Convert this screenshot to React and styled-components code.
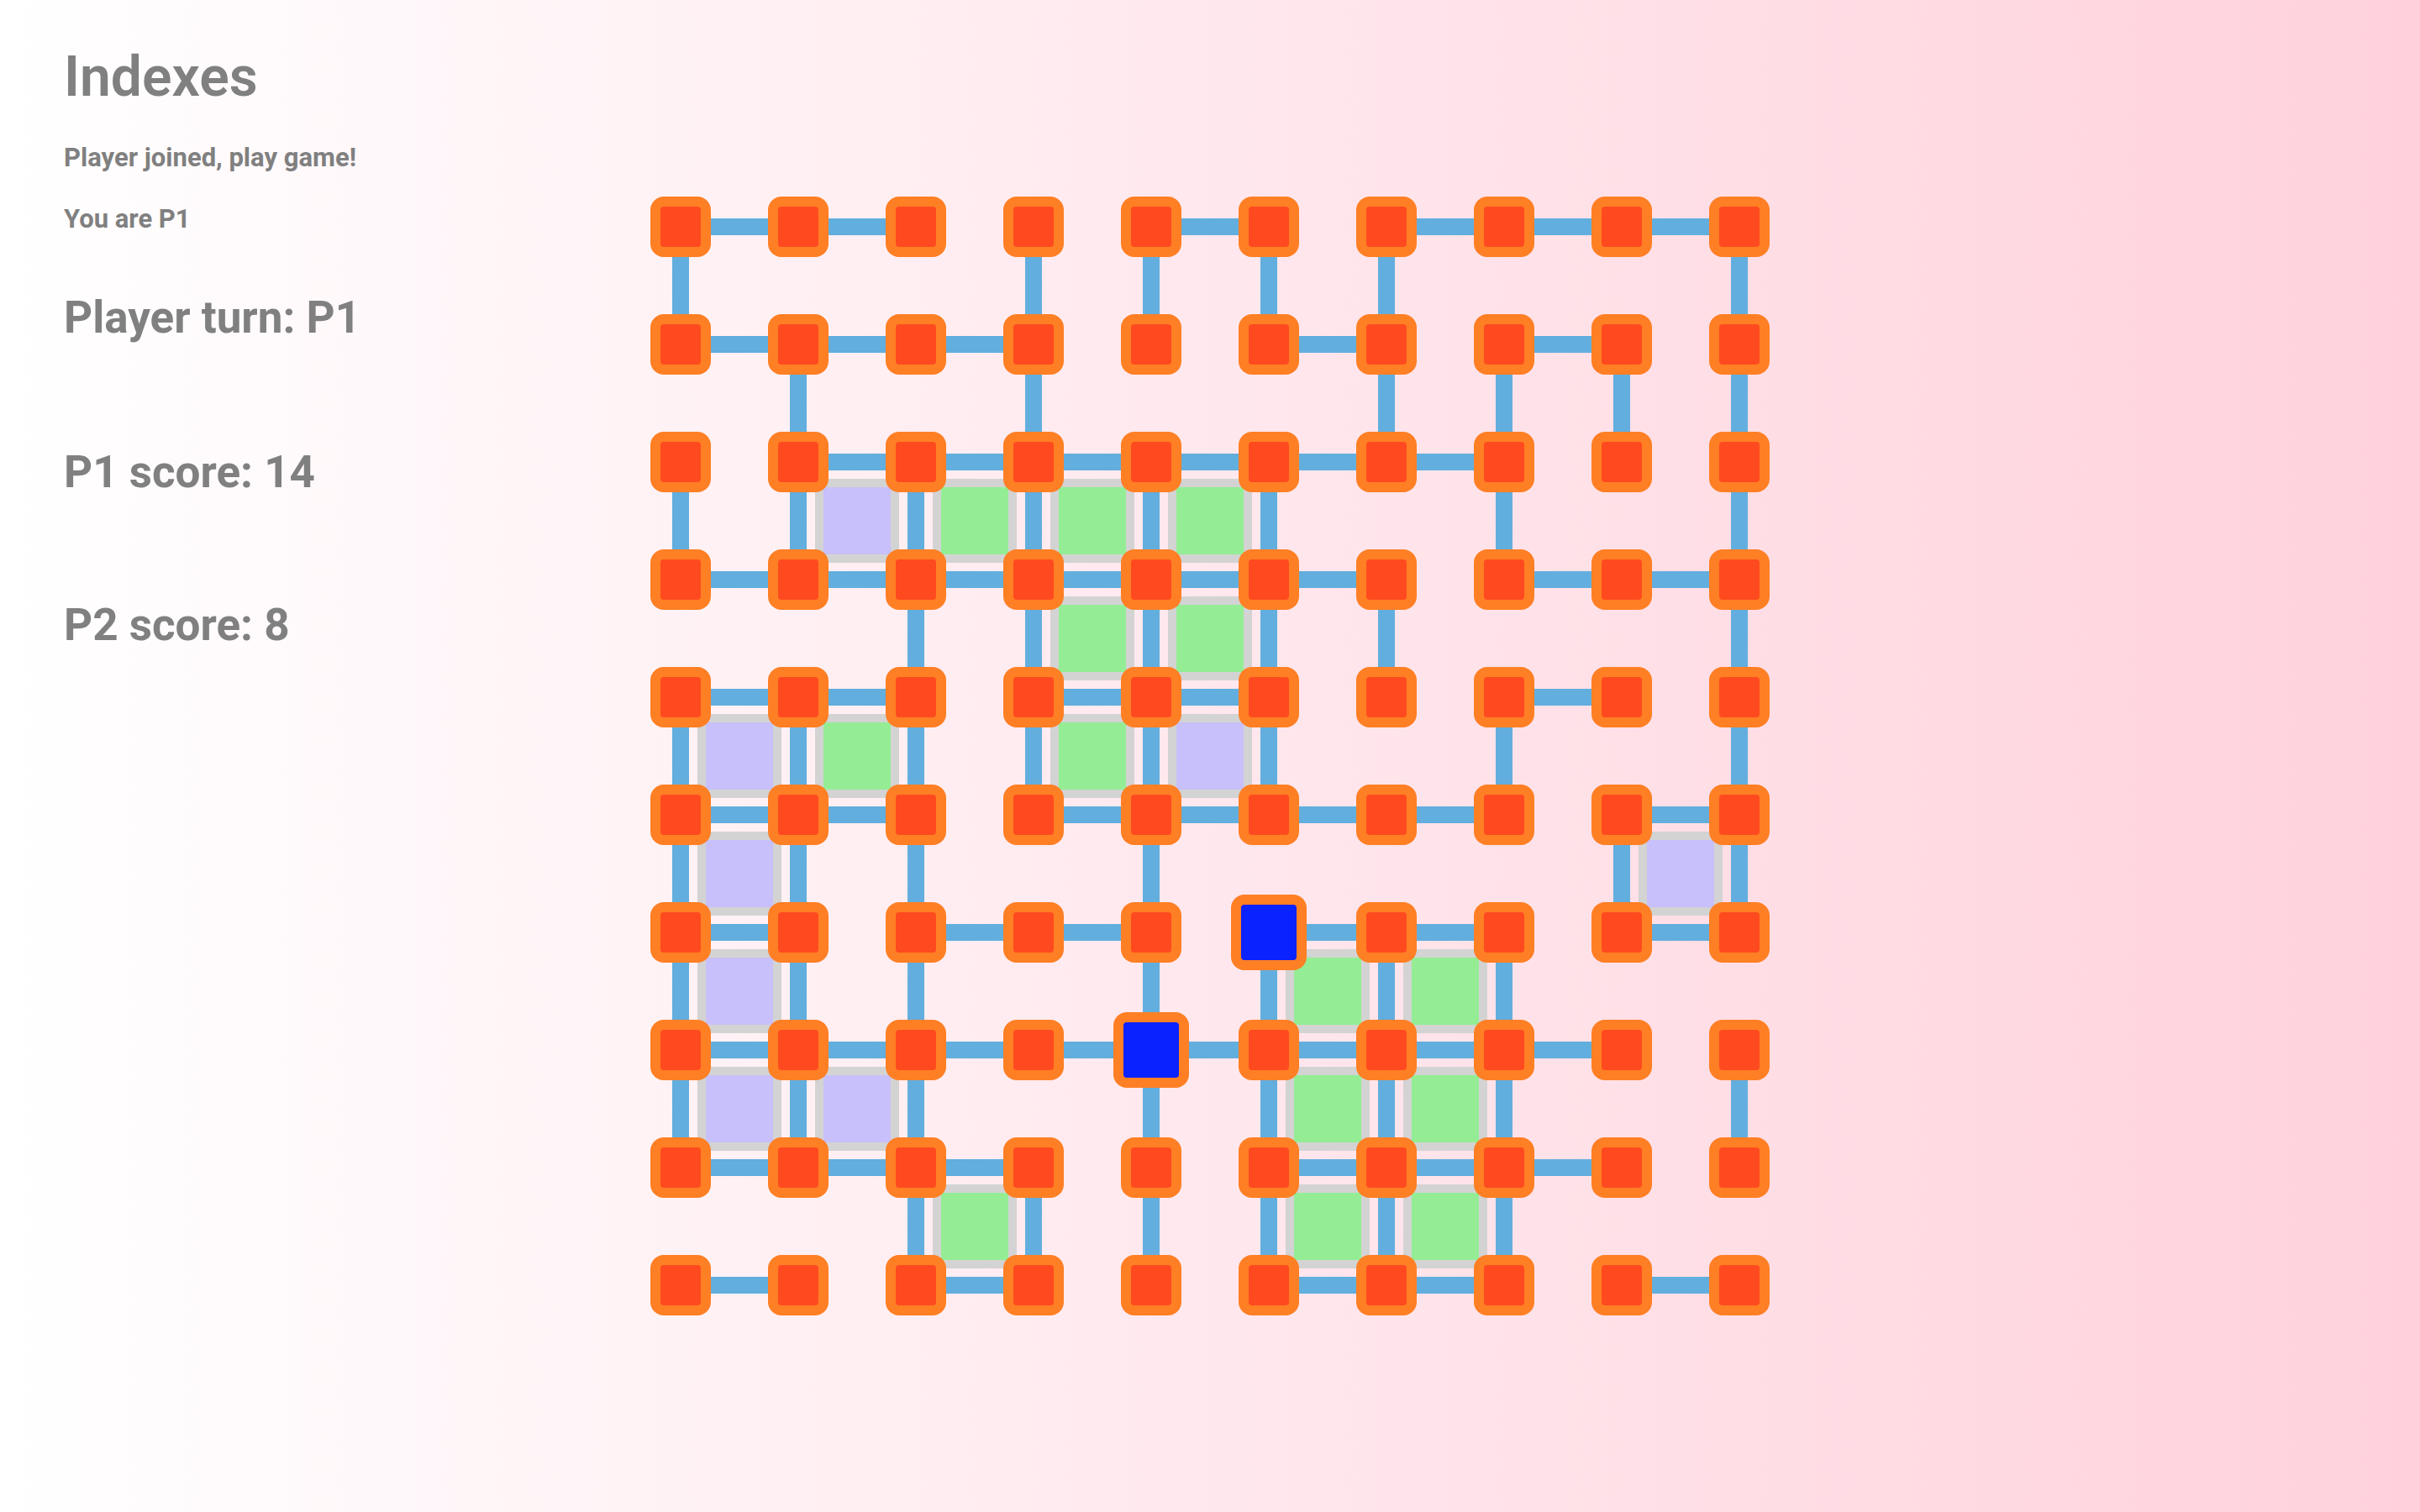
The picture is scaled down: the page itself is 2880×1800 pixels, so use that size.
import React from "react";
import styled, { createGlobalStyle } from "styled-components";

const SIZE = 10;

// connected edges: horizontal[r] = columns c where (r,c)-(r,c+1) is drawn
const horizontal = [
  [0, 1, 4, 6, 7, 8],
  [0, 1, 2, 5, 7],
  [1, 2, 3, 4, 5, 6],
  [0, 1, 2, 3, 4, 5, 7, 8],
  [0, 1, 3, 4, 7],
  [0, 1, 3, 4, 5, 6, 8],
  [0, 2, 3, 5, 6, 8],
  [0, 1, 2, 3, 4, 5, 6, 7],
  [0, 1, 2, 5, 6, 7],
  [0, 2, 5, 6, 8],
];

// vertical[r] = columns c where (r,c)-(r+1,c) is drawn
const vertical = [
  [0, 3, 4, 5, 6, 9],
  [1, 3, 6, 7, 8, 9],
  [0, 1, 2, 3, 4, 5, 7, 9],
  [2, 3, 4, 5, 6, 9],
  [0, 1, 2, 3, 4, 5, 7, 9],
  [0, 1, 2, 4, 8, 9],
  [0, 1, 2, 4, 5, 6, 7],
  [0, 1, 2, 4, 5, 6, 7, 9],
  [2, 3, 4, 5, 6, 7],
];

const boxes = [
  { r: 2, c: 1, owner: "P2" },
  { r: 2, c: 2, owner: "P1" },
  { r: 2, c: 3, owner: "P1" },
  { r: 2, c: 4, owner: "P1" },
  { r: 3, c: 3, owner: "P1" },
  { r: 3, c: 4, owner: "P1" },
  { r: 4, c: 0, owner: "P2" },
  { r: 4, c: 1, owner: "P1" },
  { r: 4, c: 3, owner: "P1" },
  { r: 4, c: 4, owner: "P2" },
  { r: 5, c: 0, owner: "P2" },
  { r: 5, c: 8, owner: "P2" },
  { r: 6, c: 0, owner: "P2" },
  { r: 6, c: 5, owner: "P1" },
  { r: 6, c: 6, owner: "P1" },
  { r: 7, c: 0, owner: "P2" },
  { r: 7, c: 1, owner: "P2" },
  { r: 7, c: 5, owner: "P1" },
  { r: 7, c: 6, owner: "P1" },
  { r: 8, c: 2, owner: "P1" },
  { r: 8, c: 5, owner: "P1" },
  { r: 8, c: 6, owner: "P1" },
];

const lastMove = ["6-5", "7-4"];

function App() {
  const dots = [];
  for (let r = 0; r < SIZE; r++) {
    for (let c = 0; c < SIZE; c++) {
      dots.push(
        <Dot
          key={`d${r}-${c}`}
          $row={r * 2 + 1}
          $col={c * 2 + 1}
          $active={lastMove.includes(`${r}-${c}`)}
        />
      );
    }
  }

  return (
    <>
      <GlobalStyle />
      <Page>
        <Sidebar>
          <Title>Indexes</Title>
          <Status $space={47}>Player joined, play game!</Status>
          <Status $space={42}>You are P1</Status>
          <Heading $space={76}>Player turn: P1</Heading>
          <Heading $space={131}>P1 score: 14</Heading>
          <Heading $space={129}>P2 score: 8</Heading>
        </Sidebar>
        <Board>
          {boxes.map(({ r, c, owner }) => (
            <Box key={`b${r}-${c}`} $row={r * 2 + 2} $col={c * 2 + 2} $owner={owner} />
          ))}
          {horizontal.map((cols, r) =>
            cols.map((c) => <HLine key={`h${r}-${c}`} $row={r * 2 + 1} $col={c * 2 + 2} />)
          )}
          {vertical.map((cols, r) =>
            cols.map((c) => <VLine key={`v${r}-${c}`} $row={r * 2 + 2} $col={c * 2 + 1} />)
          )}
          {dots}
        </Board>
      </Page>
    </>
  );
}

const GlobalStyle = createGlobalStyle`
  * {
    box-sizing: border-box;
  }

  body {
    margin: 0;
    font-family: Roboto, "Liberation Sans", Arial, sans-serif;
    color: #808080;
    background: linear-gradient(to right, #ffffff, #ffd1dc);
    min-height: 100vh;
  }
`;

const Page = styled.div`
  display: flex;
  align-items: flex-start;

  min-height: 100vh;
`;

const Sidebar = styled.div`
  display: flex;
  flex-direction: column;
  flex: 0 0 774px;

  padding: 59px 0 0 76px;
`;

const Title = styled.h1`
  margin: 0;

  font-size: 66px;
  font-weight: 600;
  line-height: 1;
`;

const Status = styled.p`
  margin: ${({ $space }) => $space}px 0 0;

  font-size: 31px;
  font-weight: 700;
  line-height: 1;
`;

const Heading = styled.h2`
  margin: ${({ $space }) => $space}px 0 0;

  font-size: 53px;
  font-weight: 700;
  line-height: 1;
`;

const Board = styled.div`
  display: grid;
  grid-template-columns: repeat(9, 72px 68px) 72px;
  grid-template-rows: repeat(9, 72px 68px) 72px;

  margin-top: 234px;
`;

const Cell = styled.div`
  grid-row: ${({ $row }) => $row};
  grid-column: ${({ $col }) => $col};
`;

const Dot = styled(Cell)`
  z-index: 2;

  margin: ${({ $active }) => ($active ? "-9px" : "0")};

  border: 12px solid #ff7f24;
  border-radius: 16px;
  background: ${({ $active }) => ($active ? "#0a22ff" : "#ff4a1f")};
`;

const HLine = styled(Cell)`
  align-self: center;

  height: 20px;
  margin: 0 -4px;

  background: #62aede;
`;

const VLine = styled(Cell)`
  justify-self: center;

  width: 20px;
  margin: -4px 0;

  background: #62aede;
`;

const Box = styled(Cell)`
  margin: -16px;

  border: 10px solid #d3d3d3;
  background: ${({ $owner }) => ($owner === "P1" ? "#94ed94" : "#c8c0fa")};
`;

export default App;
